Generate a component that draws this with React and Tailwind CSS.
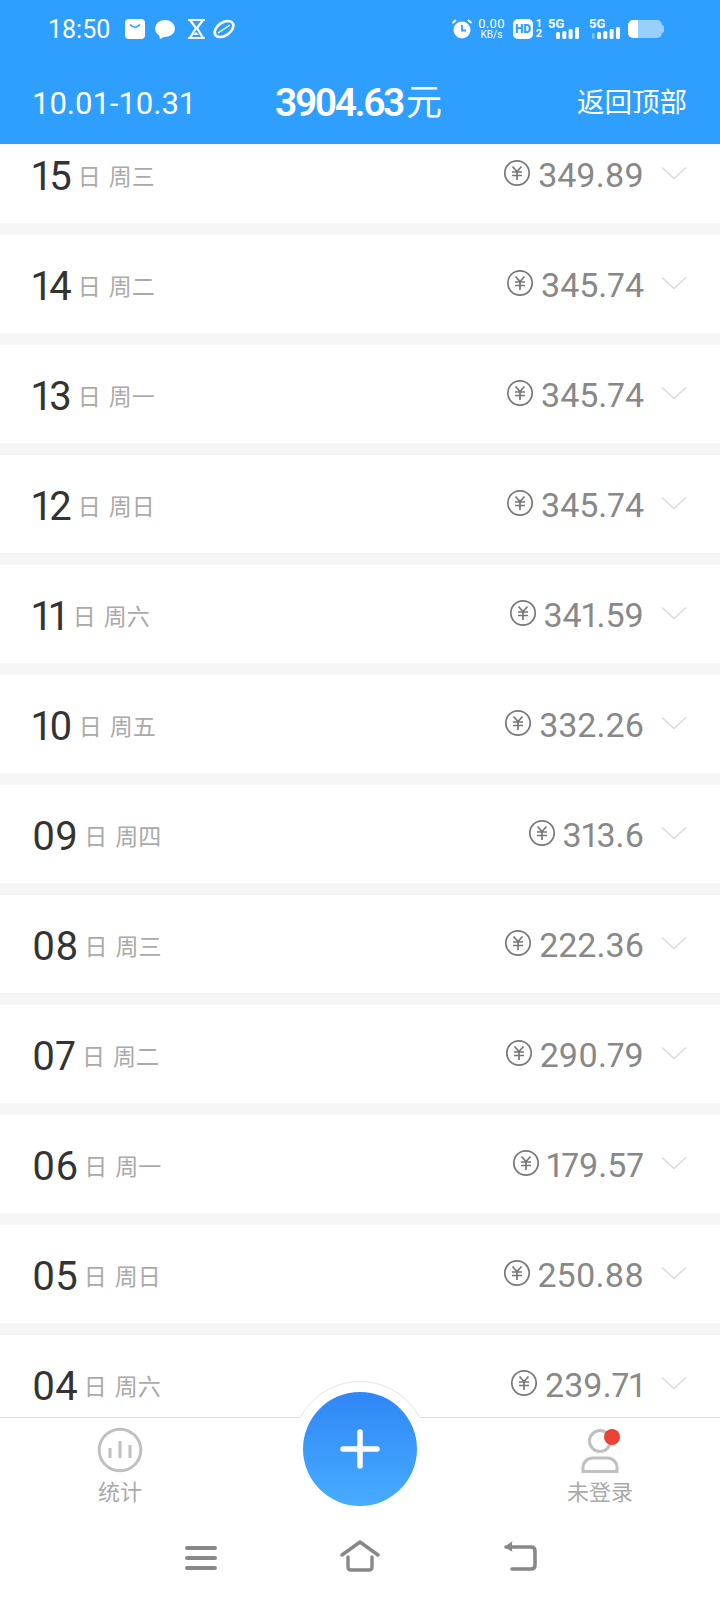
import React from 'react';

const FONT = 'font-["Roboto","Noto_Sans_CJK_SC",sans-serif]';

const rows = [
  ['15', '周三', '349.89'],
  ['14', '周二', '345.74'],
  ['13', '周一', '345.74'],
  ['12', '周日', '345.74'],
  ['11', '周六', '341.59'],
  ['10', '周五', '332.26'],
  ['09', '周四', '313.6'],
  ['08', '周三', '222.36'],
  ['07', '周二', '290.79'],
  ['06', '周一', '179.57'],
  ['05', '周日', '250.88'],
  ['04', '周六', '239.71'],
];

const YuanIcon = () => (
  <svg width="28" height="28" viewBox="0 0 28 28" fill="none" stroke="#777" className="mb-[3px] shrink-0">
    <circle cx="14" cy="14" r="12.2" strokeWidth="1.7" />
    <path d="M9.5 7.5 14 12.5 18.5 7.5M9 13h10M9 16.5h10M14 12.5V21" strokeWidth="1.7" />
  </svg>
);

const Chevron = () => (
  <svg width="26" height="14" viewBox="0 0 26 14" fill="none" stroke="#dcdcdc" strokeWidth="1.6" className="mb-[3px] ml-[17px] shrink-0">
    <path d="M1 1.5 13 12.5 25 1.5" />
  </svg>
);

const DayRow = ({ day, week, amount }) => (
  <div className="h-[98px] bg-white flex items-center justify-between pl-8 pr-[33px] mb-3 proportional-nums">
    <div className="flex items-center">
      <span className="text-[40px] leading-none text-[#333] mt-[5px]">{day}</span>
      <span className="text-[23px] leading-none text-[#aaa] ml-[6px] mt-[6px] flex gap-[8px]">
        <span>日</span>
        <span>{week}</span>
      </span>
    </div>
    <div className="flex items-center">
      <YuanIcon />
      <span className="text-[34px] leading-none text-[#888] ml-[7px] mt-[1px]">{amount}</span>
      <Chevron />
    </div>
  </div>
);

const StatusBar = () => (
  <div className="h-[58px] flex items-center justify-between pl-12 pr-14 text-white">
    <div className="flex items-center">
      <span className="text-[25px] leading-none">18:50</span>
      <svg width="112" height="24" viewBox="0 0 112 24" className="ml-[14px]">
        <rect x="1" y="2" width="20" height="20" rx="4" fill="#fff" />
        <path d="M6 7.500q5 5.500 10 0" fill="none" stroke="#2e9fff" strokeWidth="1.6" />
        <ellipse cx="41" cy="11.500" rx="10" ry="8.500" fill="#fff" />
        <path d="M35 17l1 5 6-3z" fill="#fff" />
        <path d="M64 3h17M64 21h17M66 3l6 8-6 10M79 3l-6 8 6 10" fill="none" stroke="#fff" strokeWidth="2.2" />
        <path d="M69 18l3-3 3 3z" fill="#fff" />
        <ellipse cx="100" cy="12" rx="10.500" ry="6.500" transform="rotate(-35 100 12)" fill="none" stroke="#fff" strokeWidth="2.6" />
        <path d="M94 16 106 8" stroke="#fff" strokeWidth="1.500" />
      </svg>
    </div>
    <div className="flex items-center">
      <svg width="22" height="22" viewBox="0 0 22 22" fill="none">
        <circle cx="11" cy="12" r="8.500" fill="#fff" />
        <path d="M11 7v5.500h4" stroke="#2e9fff" strokeWidth="1.8" />
        <path d="M1.500 5 5 2M20.500 5 17 2" stroke="#fff" strokeWidth="2" />
      </svg>
      <div className="ml-[5px] w-[27px] flex flex-col items-center text-center">
        <span className="text-[13px] leading-[12px] tracking-[0.3px]">0.00</span>
        <span className="text-[10px] leading-[10px]">KB/s</span>
      </div>
      <div className="ml-[8px] w-[20px] h-[20px] rounded-[5px] bg-white text-[#2e9fff] text-[12px] leading-[20px] font-black text-center">HD</div>
      <div className="ml-[2px] w-[8px] flex flex-col items-center text-[11px] leading-[10px] font-bold">
        <span>1</span>
        <span>2</span>
      </div>
      <svg width="34" height="22" viewBox="0 0 34 22" className="ml-[5px] overflow-visible" fill="#fff">
        <text x="0" y="10" fontSize="13" fontWeight="700" fontFamily="Roboto">5G</text>
        <rect x="8" y="14" width="4" height="7" rx="1.500" />
        <rect x="14.300" y="13" width="4" height="8" rx="1.500" />
        <rect x="20.600" y="11" width="4" height="10" rx="1.500" />
        <rect x="27" y="9" width="4" height="12" rx="1.500" />
      </svg>
      <svg width="34" height="22" viewBox="0 0 34 22" className="ml-[7px] overflow-visible" fill="#fff">
        <text x="0" y="10" fontSize="13" fontWeight="700" fontFamily="Roboto">5G</text>
        <rect x="3" y="15" width="2.500" height="6" rx="1.200" opacity=".4" />
        <rect x="8" y="14" width="4" height="7" rx="1.500" />
        <rect x="14.300" y="13" width="4" height="8" rx="1.500" />
        <rect x="20.600" y="11" width="4" height="10" rx="1.500" />
        <rect x="27" y="9" width="4" height="12" rx="1.500" />
      </svg>
      <div className="ml-[5px] flex items-center">
        <div className="w-[34px] h-[18px] rounded-[5px] bg-white/50 overflow-hidden">
          <div className="w-[10px] h-full bg-white rounded-l-[5px]"></div>
        </div>
        <div className="w-[2px] h-[8px] rounded-r bg-white/50"></div>
      </div>
    </div>
  </div>
);

const Header = () => (
  <div className="bg-[#2e9fff] h-[144px] shrink-0 text-white relative z-10">
    <StatusBar />
    <div className="h-[86px] flex items-center pl-8 pr-[33px] pt-1">
      <span className="flex-1 text-[31px] leading-none">10.01-10.31</span>
      <span className="flex items-center leading-none pr-[2px]">
        <span className="text-[39px] font-semibold tracking-[-2.4px]">3904.63</span>
        <span className="text-[36px] ml-[3px]">元</span>
      </span>
      <span className="flex-1 text-right text-[27.5px] leading-none">返回顶部</span>
    </div>
  </div>
);

const BottomNav = () => (
  <div className="relative h-[183px] shrink-0 bg-white border-t border-[#dddddd]">
    <div className="absolute left-[280px] top-[-38px] w-[160px] h-[38px] overflow-hidden">
      <div className="w-[136px] h-[136px] mx-auto mt-[1px] rounded-full bg-white border border-[#e6e6e6]"></div>
    </div>
    <div className="absolute left-[303px] top-[-26px] w-[114px] h-[114px] rounded-full bg-gradient-to-b from-[#2f86f6] to-[#48acff] flex items-center justify-center">
      <svg width="40" height="40" viewBox="0 0 40 40" stroke="#fff" strokeWidth="5.500" strokeLinecap="round">
        <path d="M20 3v34M3 20h34" />
      </svg>
    </div>
    <div className="grid grid-cols-3 h-[98px]">
      <div className="flex flex-col items-center pt-[9px]">
        <svg width="46" height="46" viewBox="0 0 46 46" fill="none" stroke="#c0c0c0">
          <circle cx="23" cy="23" r="20.800" strokeWidth="3" />
          <path d="M13 21v10M23 14v17M33 18v13" strokeWidth="3" />
        </svg>
        <span className="text-[22px] leading-none text-[#aaa] mt-[9px]">统计</span>
      </div>
      <div></div>
      <div className="flex flex-col items-center pt-[10px]">
        <div className="relative w-[46px] h-[46px]">
          <svg width="46" height="46" viewBox="0 0 46 46" fill="none" stroke="#c0c0c0" strokeWidth="3">
            <circle cx="23" cy="13" r="10.500" />
            <path d="M6 43.500v-4c0-5 4-9.500 10-9.500h14c6 0 10 4.500 10 9.500v4z" />
          </svg>
          <div className="absolute left-[27px] top-[1px] w-4 h-4 rounded-full bg-[#ea4335]"></div>
        </div>
        <span className="text-[22px] leading-none text-[#aaa] mt-[8px]">未登录</span>
      </div>
    </div>
    <div className="flex justify-center items-center gap-[123px] pt-[24px] pl-[2px]">
      <svg width="32" height="28" viewBox="0 0 32 28" stroke="#888" strokeWidth="4" strokeLinecap="round" className="mt-[4px]">
        <path d="M2 4h28M2 14h28M2 24h28" />
      </svg>
      <svg width="40" height="32" viewBox="0 0 40 32" fill="none" stroke="#888" strokeWidth="3.400" strokeLinecap="round" strokeLinejoin="round">
        <path d="M2 15 20 2l18 13" />
        <path d="M8 17v10q0 3 3 3h18q3 0 3-3V17" />
      </svg>
      <svg width="34" height="32" viewBox="0 0 34 32" fill="none" stroke="#888" strokeWidth="3.600" strokeLinecap="round" strokeLinejoin="round">
        <path d="M3 7h25q4 0 4 4v14q0 4-4 4H9" />
        <path d="M9 2 2 7l7 4" fill="#888" strokeWidth="1" />
      </svg>
    </div>
  </div>
);

export default function App() {
  return (
    <div className={`w-[720px] h-[1600px] flex flex-col overflow-hidden bg-[#f5f5f5] ${FONT}`}>
      <Header />
      <div className="flex-1 min-h-0 overflow-hidden">
        <div className="-mt-[19px]">
          {rows.map(([day, week, amount]) => (
            <DayRow key={day} day={day} week={week} amount={amount} />
          ))}
        </div>
      </div>
      <BottomNav />
    </div>
  );
}
